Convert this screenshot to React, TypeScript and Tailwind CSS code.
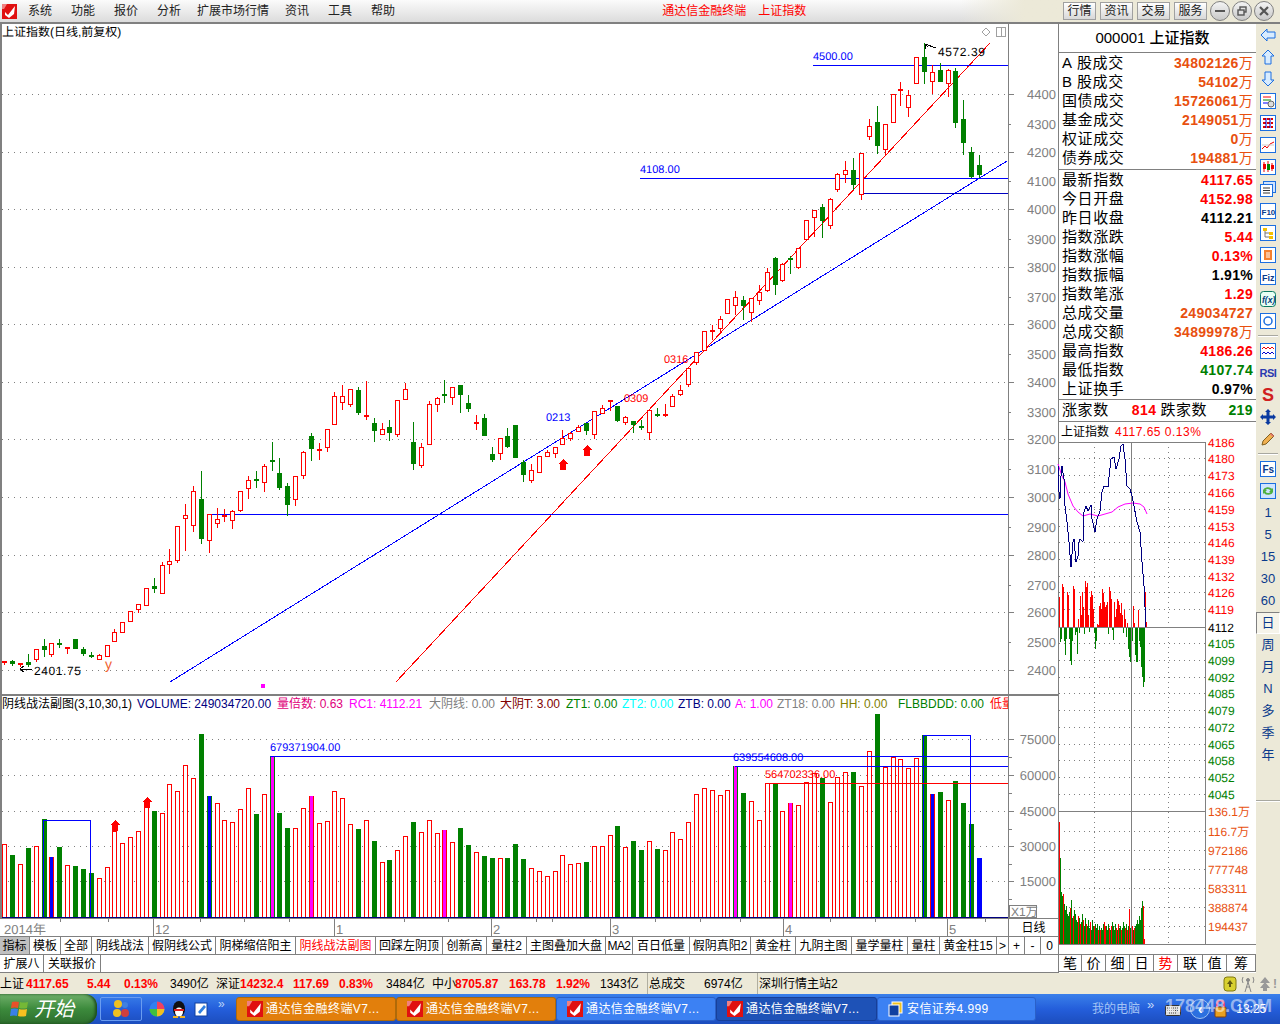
import type { ReactNode } from 'react';

const RED = '#ff0000';
const GREEN = '#008000';
const BLUE = '#0000ff';
const ORANGE = '#e8500f';
const GREY = '#808080';

// hi, body top, body bottom, lo (page pixels), r = up, g = down
type Candle = [number, number, number, number, 'r' | 'g'];
const CANDLES: Candle[] = [
  [661, 661, 663, 665, 'r'], [660, 661, 664, 666, 'g'], [663, 663, 665, 667, 'r'], [654, 662, 665, 667, 'g'],
  [649, 649, 659, 662, 'r'], [639, 646, 650, 657, 'g'], [643, 643, 654, 657, 'r'], [639, 643, 645, 648, 'g'],
  [647, 647, 648, 654, 'r'], [639, 639, 649, 649, 'g'], [647, 649, 654, 656, 'g'], [652, 655, 656, 658, 'g'],
  [654, 655, 659, 659, 'r'], [645, 645, 656, 657, 'r'], [629, 632, 641, 642, 'r'], [622, 622, 632, 632, 'r'],
  [611, 611, 621, 621, 'r'], [604, 604, 609, 613, 'r'], [588, 588, 605, 606, 'r'], [578, 586, 589, 593, 'g'],
  [562, 565, 593, 593, 'r'], [549, 561, 564, 574, 'r'], [526, 526, 560, 563, 'r'], [504, 515, 518, 551, 'r'],
  [486, 491, 525, 532, 'r'], [471, 499, 539, 544, 'g'], [514, 514, 540, 553, 'r'], [508, 519, 523, 528, 'r'],
  [509, 515, 517, 522, 'r'], [510, 511, 520, 529, 'r'], [491, 491, 510, 512, 'r'], [476, 480, 488, 499, 'r'],
  [471, 479, 481, 488, 'g'], [464, 466, 482, 492, 'r'], [442, 460, 461, 471, 'g'], [458, 473, 488, 490, 'g'],
  [483, 486, 505, 516, 'g'], [476, 476, 499, 506, 'r'], [451, 452, 475, 479, 'r'], [433, 436, 449, 461, 'g'],
  [443, 449, 451, 460, 'r'], [429, 429, 447, 452, 'r'], [392, 396, 424, 424, 'r'], [385, 396, 402, 410, 'r'],
  [389, 389, 404, 407, 'r'], [387, 390, 413, 415, 'g'], [381, 415, 417, 420, 'r'], [418, 423, 431, 442, 'g'],
  [423, 429, 434, 435, 'r'], [420, 427, 433, 441, 'g'], [400, 400, 434, 437, 'r'], [383, 389, 399, 399, 'r'],
  [422, 442, 464, 470, 'g'], [443, 447, 465, 468, 'r'], [401, 404, 444, 445, 'r'], [397, 398, 404, 412, 'r'],
  [380, 394, 396, 403, 'g'], [387, 387, 397, 405, 'r'], [385, 385, 395, 413, 'g'], [395, 403, 409, 412, 'g'],
  [415, 422, 423, 430, 'r'], [414, 418, 436, 436, 'g'], [447, 454, 460, 462, 'g'], [438, 438, 453, 460, 'r'],
  [428, 436, 447, 448, 'g'], [425, 425, 458, 458, 'g'], [460, 462, 475, 482, 'g'], [464, 470, 480, 483, 'r'],
  [456, 456, 472, 473, 'r'], [450, 452, 456, 457, 'r'], [447, 447, 453, 458, 'r'], [430, 438, 444, 444, 'r'],
  [432, 433, 438, 441, 'r'], [425, 427, 431, 431, 'r'], [423, 423, 431, 435, 'g'], [411, 411, 434, 439, 'r'],
  [405, 408, 413, 413, 'r'], [400, 400, 402, 411, 'r'], [406, 406, 421, 422, 'g'], [416, 417, 422, 425, 'r'],
  [421, 421, 425, 433, 'g'], [420, 426, 427, 430, 'g'], [410, 410, 432, 440, 'r'], [408, 414, 415, 417, 'g'],
  [404, 414, 415, 417, 'r'], [394, 396, 406, 407, 'r'], [385, 390, 394, 396, 'r'], [368, 368, 384, 387, 'r'],
  [352, 352, 362, 365, 'r'], [331, 331, 350, 351, 'r'], [325, 330, 331, 340, 'r'], [316, 319, 328, 333, 'r'],
  [299, 299, 313, 314, 'r'], [291, 297, 305, 315, 'r'], [296, 300, 306, 320, 'g'], [298, 298, 312, 322, 'r'],
  [285, 292, 300, 305, 'r'], [268, 272, 290, 292, 'r'], [257, 258, 285, 295, 'g'], [263, 264, 280, 282, 'r'],
  [256, 258, 260, 274, 'g'], [248, 248, 267, 269, 'r'], [220, 220, 239, 240, 'r'], [210, 210, 217, 237, 'r'],
  [204, 207, 221, 238, 'g'], [198, 199, 225, 229, 'r'], [173, 174, 189, 192, 'r'], [161, 170, 174, 183, 'r'],
  [158, 170, 185, 190, 'g'], [153, 153, 194, 200, 'r'], [119, 126, 136, 140, 'r'], [106, 122, 146, 154, 'g'],
  [124, 124, 149, 156, 'r'], [94, 94, 122, 123, 'r'], [82, 89, 91, 106, 'r'], [90, 95, 107, 117, 'r'],
  [57, 57, 83, 83, 'r'], [43, 57, 72, 84, 'g'], [65, 72, 81, 94, 'r'], [63, 70, 82, 82, 'g'],
  [69, 70, 83, 97, 'r'], [68, 71, 123, 128, 'g'], [100, 119, 143, 155, 'g'], [147, 152, 177, 178, 'g'],
  [155, 165, 175, 178, 'g'],
];

// top of each volume bar (page pixels)
type BarKind = 'r' | 'g' | 'B' | 'G' | 'M' | 'N' | 'S';
const BARS: [number, BarKind][] = [
  [844, 'r'], [855, 'g'], [864, 'r'], [848, 'g'], [846, 'r'], [819, 'g'], [857, 'B'], [847, 'g'], [865, 'r'], [866, 'g'],
  [869, 'g'], [873, 'g'], [878, 'r'], [867, 'r'], [831, 'r'], [843, 'r'], [837, 'r'], [831, 'r'], [807, 'r'], [811, 'g'],
  [813, 'r'], [784, 'r'], [791, 'r'], [765, 'r'], [778, 'r'], [734, 'g'], [796, 'G'], [803, 'r'], [820, 'r'], [822, 'r'],
  [809, 'r'], [788, 'r'], [814, 'g'], [794, 'r'], [756, 'N'], [813, 'g'], [828, 'g'], [828, 'r'], [808, 'r'], [796, 'M'],
  [823, 'r'], [821, 'r'], [791, 'r'], [798, 'r'], [824, 'r'], [829, 'g'], [820, 'r'], [841, 'g'], [862, 'r'], [860, 'g'],
  [850, 'r'], [836, 'r'], [822, 'g'], [832, 'r'], [820, 'r'], [833, 'r'], [830, 'M'], [842, 'r'], [828, 'g'], [845, 'g'],
  [852, 'r'], [856, 'g'], [858, 'g'], [858, 'r'], [858, 'g'], [844, 'g'], [859, 'g'], [868, 'r'], [871, 'r'], [876, 'r'],
  [871, 'r'], [855, 'r'], [864, 'r'], [863, 'r'], [862, 'g'], [846, 'r'], [846, 'r'], [835, 'r'], [826, 'g'], [847, 'r'],
  [841, 'g'], [850, 'g'], [841, 'r'], [849, 'g'], [850, 'r'], [832, 'r'], [839, 'r'], [822, 'r'], [794, 'r'], [788, 'r'],
  [790, 'r'], [795, 'r'], [790, 'r'], [766, 'N'], [793, 'g'], [801, 'r'], [820, 'r'], [783, 'r'], [783, 'g'], [811, 'r'],
  [803, 'M'], [805, 'r'], [782, 'r'], [773, 'r'], [778, 'g'], [802, 'r'], [777, 'r'], [772, 'r'], [772, 'g'], [786, 'r'],
  [751, 'r'], [714, 'g'], [767, 'r'], [757, 'r'], [759, 'r'], [768, 'r'], [758, 'r'], [735, 'g'], [794, 'B'], [792, 'g'],
  [800, 'r'], [781, 'g'], [803, 'g'], [824, 'g'], [858, 'S'],
];

const MAIN_AXIS: [string, number][] = [
  ['4400', 94], ['4300', 124], ['4200', 152], ['4100', 181], ['4000', 209], ['3900', 239], ['3800', 267],
  ['3700', 297], ['3600', 324], ['3500', 354], ['3400', 382], ['3300', 412], ['3200', 439], ['3100', 469],
  ['3000', 497], ['2900', 527], ['2800', 555], ['2700', 585], ['2600', 612], ['2500', 642], ['2400', 670],
];

const MINI_LABELS: [string, number, string][] = [
  ['4186', 443, RED], ['4180', 459, RED], ['4173', 476, RED], ['4166', 493, RED], ['4159', 510, RED], ['4153', 527, RED],
  ['4146', 543, RED], ['4139', 560, RED], ['4132', 577, RED], ['4126', 593, RED], ['4119', 610, RED], ['4112', 628, '#000'],
  ['4105', 644, GREEN], ['4099', 661, GREEN], ['4092', 678, GREEN], ['4085', 694, GREEN], ['4079', 711, GREEN],
  ['4072', 728, GREEN], ['4065', 745, GREEN], ['4058', 761, GREEN], ['4052', 778, GREEN], ['4045', 795, GREEN],
  ['136.1万', 812, ORANGE], ['116.7万', 832, ORANGE], ['972186', 851, ORANGE], ['777748', 870, ORANGE],
  ['583311', 889, ORANGE], ['388874', 908, ORANGE], ['194437', 927, ORANGE],
];

// one value per minute, + red, - green
const MINI_BARS = [
  30, -15, -12, 43, 40, -14, -28, -12, 35, 32, -12, -34, -38, -14, 41, 38, -8, -5, -27, 8, -6, 31, 12, 35, 20, -7, 46, 40, 44, 12,
  -5, 30, 36, 32, 18, -6, -22, -14, 3, 2, 21, 24, 18, 38, 34, 25, 20, 22, 25, -7, 40, 36, 28, -3, -13, 25, 10, 18, 28, 26, 22, 14,
  24, 12, -6, 17, 8, -10, 4, -22, -30, -35, -28, -14, 21, 4, -28, -35, -35, 17, -14, -20, -40, -50, -60, -55, 35, 5,
];
const MINI_VOLS = [
  122, -86, -52, -48, 50, -40, -34, -38, -30, -28, -32, 36, -44, -26, 28, -34, -30, -24, -22, 28, -26, 20, -22, -30, 24, -18, -26, 20,
  -18, -24, -16, 22, -14, -24, -18, 18, -20, -16, -20, 14, -18, 14, -16, -14, -20, 22, 18, -18, -14, -20, 16, -14, 18, -22, -18, -14,
  -20, 16, -14, 20, -16, -18, 14, -16, -22, -18, 16, -20, 14, -18, 35, -16, -22, 18, -14, 16, -18, -20, -24, -20, -28, -24, -36, -43, 38, 5,
];

const PRICE_LINE = '1058,467 1059,493 1060,500 1061,477 1062,467 1064,480 1065,507 1067,523 1069,543 1071,568 1073,543 1074,540 1076,563 1078,557 1079,543 1080,540 1083,543 1084,513 1086,507 1088,512 1091,506 1092,520 1095,533 1097,520 1100,512 1102,493 1104,487 1108,488 1111,460 1114,458 1116,470 1119,460 1121,447 1123,445 1125,460 1127,487 1130,490 1132,497 1134,507 1137,523 1140,533 1142,563 1144,587 1146,628';
const AVG_LINE = '1058,465 1062,477 1065,483 1068,495 1073,507 1078,513 1083,517 1090,515 1098,517 1105,515 1112,513 1118,508 1125,505 1133,504 1140,505 1144,508 1147,515';

const CN = "font-['Liberation_Sans','Noto_Sans_CJK_SC',sans-serif]";

function UpArrow({ x, y }: { x: number; y: number }) {
  return <polygon points={`${x},${y} ${x + 5},${y + 5} ${x + 3},${y + 5} ${x + 3},${y + 11} ${x - 3},${y + 11} ${x - 3},${y + 5} ${x - 5},${y + 5}`} fill={RED} />;
}

function MainChart() {
  return (
    <svg width={1058} height={670} viewBox="0 24 1058 670" className="block bg-white" shapeRendering="crispEdges">
      <rect x={0} y={24} width={2} height={670} fill={GREY} />
      {[94, 152, 209, 267, 324, 382, 439, 497, 555, 612, 670].map((y) => (
        <line key={y} x1={2} x2={1008} y1={y + 0.5} y2={y + 0.5} stroke={GREY} strokeDasharray="1 5" />
      ))}
      {MAIN_AXIS.map(([label, y], i) => (
        <g key={label}>
          <line x1={1008} x2={i % 2 ? 1011 : 1014} y1={y + 0.5} y2={y + 0.5} stroke={GREY} />
          <text x={1056} y={y + 5} textAnchor="end" fontSize={13} fill={GREY} textRendering="geometricPrecision">{label}</text>
        </g>
      ))}

      {/* trend lines */}
      <line x1={170} y1={682} x2={1007} y2={161} stroke={BLUE} />
      <line x1={396} y1={682} x2={990} y2={43} stroke={RED} />
      <line x1={813} x2={1008} y1={65.5} y2={65.5} stroke={BLUE} />
      <line x1={640} x2={1008} y1={178.5} y2={178.5} stroke={BLUE} />
      <line x1={860} x2={1008} y1={193.5} y2={193.5} stroke="#0000c0" />
      <line x1={207} x2={1008} y1={514.5} y2={514.5} stroke={BLUE} />

      {CANDLES.map(([hi, top, bot, lo, kind], n) => {
        const cx = Math.round(4.33 + 7.86 * n);
        const color = kind === 'r' ? RED : GREEN;
        const flat = bot - top <= 2;
        return (
          <g key={n}>
            <line x1={cx + 0.5} x2={cx + 0.5} y1={hi} y2={lo} stroke={color} />
            {kind === 'r' && !flat ? (
              <rect x={cx - 1.5} y={top + 0.5} width={4} height={bot - top} fill="#fff" stroke={RED} />
            ) : (
              <rect x={cx - 2} y={top} width={5} height={Math.max(bot - top, 2)} fill={color} />
            )}
          </g>
        );
      })}

      <UpArrow x={563} y={459} />
      <UpArrow x={587} y={445} />
      <rect x={261} y={684} width={4} height={4} fill="#ff00ff" />
      <path d="M925 44v5M925 44l3 3M925 44l11 4" stroke="#000" fill="none" />
      <path d="M20 669h12M20 669l4-3M20 669l4 3" stroke="#000" fill="none" />

      <g textRendering="geometricPrecision">
        <text x={2} y={36} fontSize={12} fill="#000">上证指数(日线,前复权)</text>
        <text x={813} y={60} fontSize={11} fill={BLUE}>4500.00</text>
        <text x={640} y={173} fontSize={11} fill={BLUE}>4108.00</text>
        <text x={938} y={56} fontSize={12} letterSpacing={0.6} fill="#000">4572.39</text>
        <text x={34} y={675} fontSize={12} letterSpacing={0.6} fill="#000">2401.75</text>
        <text x={546} y={421} fontSize={11} fill={BLUE}>0213</text>
        <text x={624} y={402} fontSize={11} fill={RED}>0309</text>
        <text x={664} y={363} fontSize={11} fill={RED}>0316</text>
        <text x={105} y={669} fontSize={14} fill="#f06030">y</text>
      </g>

      <path d="M986 28l4 4-4 4-4-4z" fill="#fff" stroke="#a0a0a0" />
      <rect x={996.5} y={27.5} width={9} height={9} fill="#fff" stroke="#a0a0a0" />
      <line x1={1001.5} x2={1001.5} y1={28} y2={36} stroke="#a0a0a0" />
      <line x1={1008.5} x2={1008.5} y1={24} y2={694} stroke={GREY} />
    </svg>
  );
}

function VolumeBars() {
  return (
    <svg width={1006} height={207} viewBox="2 711 1006 207" className="block" shapeRendering="crispEdges">
      {[739, 775, 811, 846, 881].map((y) => (
        <line key={y} x1={2} x2={1008} y1={y + 0.5} y2={y + 0.5} stroke={GREY} strokeDasharray="1 5" />
      ))}
      {BARS.map(([top, kind], n) => {
        const cx = Math.round(4.33 + 7.86 * n);
        const h = 917 - top;
        if (kind === 'r') {
          return <rect key={n} x={cx - 1.5} y={top + 0.5} width={4} height={h} fill="#fff" stroke={RED} />;
        }
        const edge = kind === 'B' || kind === 'M' ? RED : kind === 'S' ? BLUE : GREEN;
        const core = kind === 'B' || kind === 'G' || kind === 'S' ? BLUE : kind === 'g' ? GREEN : '#ff00ff';
        return (
          <g key={n}>
            <rect x={cx - 2} y={top} width={5} height={h} fill={edge} />
            <rect x={cx - 1} y={top} width={3} height={h} fill={core} />
          </g>
        );
      })}
      <rect x={43.5} y={820.5} width={47} height={97} fill="none" stroke={BLUE} />
      <rect x={923.5} y={735.5} width={47} height={182} fill="none" stroke={BLUE} />
      <line x1={270} x2={1008} y1={756.5} y2={756.5} stroke={BLUE} />
      <line x1={735} x2={1008} y1={766.5} y2={766.5} stroke={BLUE} />
      <line x1={765} x2={1008} y1={783.5} y2={783.5} stroke={RED} />
      <line x1={2} x2={1008} y1={917.5} y2={917.5} stroke="#000080" />
      <g textRendering="geometricPrecision" fontSize={11}>
        <text x={270} y={751} fill={BLUE}>679371904.00</text>
        <text x={733} y={761} fill={BLUE}>639554608.00</text>
        <text x={765} y={778} fill={RED}>564702336.00</text>
      </g>
      <UpArrow x={115} y={820} />
      <UpArrow x={147} y={797} />
    </svg>
  );
}

function VolumeAxis() {
  const labels: [string, number][] = [['75000', 739], ['60000', 775], ['45000', 811], ['30000', 846], ['15000', 881]];
  return (
    <svg width={49} height={222} viewBox="1009 696 49 222" className="block" shapeRendering="crispEdges">
      {labels.map(([label, y]) => (
        <g key={label}>
          <line x1={1009} x2={1014} y1={y + 0.5} y2={y + 0.5} stroke={GREY} />
          <line x1={1009} x2={1012} y1={y + 18.5} y2={y + 18.5} stroke={GREY} />
          <text x={1056} y={y + 5} textAnchor="end" fontSize={13} fill={GREY} textRendering="geometricPrecision">{label}</text>
        </g>
      ))}
      <rect x={1009.5} y={905.5} width={27} height={12} fill="#fff" stroke={GREY} />
      <text x={1011} y={916} fontSize={12} fill={GREY} textRendering="geometricPrecision">X1万</text>
    </svg>
  );
}

const VOL_HEADER: [string, string, string][] = [
  ['阴线战法副图(3,10,30,1)', 'text-black', 'w-[135px]'],
  ['VOLUME: 249034720.00', 'text-[#000080]', 'w-[140px]'],
  ['量倍数: 0.63', 'text-[#e0007a]', 'w-[72px]'],
  ['RC1: 4112.21', 'text-[#ff00ff]', 'w-[80px]'],
  ['大阴线: 0.00', 'text-[#808080]', 'w-[71px]'],
  ['大阴T: 3.00', 'text-[#800000]', 'w-[66px]'],
  ['ZT1: 0.00', 'text-[#008000]', 'w-[56px]'],
  ['ZT2: 0.00', 'text-[#00ffff]', 'w-[56px]'],
  ['ZTB: 0.00', 'text-[#000080]', 'w-[57px]'],
  ['A: 1.00', 'text-[#ff00ff]', 'w-[42px]'],
  ['ZT18: 0.00', 'text-[#808080]', 'w-[63px]'],
  ['HH: 0.00', 'text-[#808000]', 'w-[58px]'],
  ['FLBBDDD: 0.00', 'text-[#008000]', 'w-[92px]'],
  ['低量', 'text-[#ff0000]', 'w-[30px]'],
];

function TimeAxis() {
  const months: [string, number][] = [['12', 154], ['1', 335], ['2', 492], ['3', 611], ['4', 784], ['5', 948]];
  const ticks = [60, 108, 200, 244, 289, 404, 448, 536, 552, 655, 700, 740, 830, 875, 915, 985];
  return (
    <svg width={1008} height={18} viewBox="0 919 1008 18" className="block" shapeRendering="crispEdges">
      {ticks.map((x) => (
        <line key={x} x1={x + 0.5} x2={x + 0.5} y1={919} y2={922} stroke={GREY} />
      ))}
      {months.map(([label, x]) => (
        <g key={label}>
          <line x1={x - 0.5} x2={x - 0.5} y1={919} y2={936} stroke={GREY} />
          <text x={x + 1} y={934} fontSize={13} fill={GREY} textRendering="geometricPrecision">{label}</text>
        </g>
      ))}
      <text x={4} y={934} fontSize={13} fill={GREY} textRendering="geometricPrecision">2014年</text>
    </svg>
  );
}

const TABS: [string, string][] = [
  ['指标', 'w-[30px] bg-[#c0c0c0]'], ['模板', 'w-[31px]'], ['全部', 'w-[31px]'], ['阴线战法', 'w-[57px]'], ['假阴线公式', 'w-[67px]'],
  ['阴梯缩倍阳主', 'w-[80px]'], ['阴线战法副图', 'w-[80px] text-[#ff0000]'], ['回踩左阴顶', 'w-[67px]'], ['创新高', 'w-[44px]'],
  ['量柱2', 'w-[40px]'], ['主图叠加大盘', 'w-[79px]'], ['MA2', 'w-[27px] tracking-[-0.6px]'], ['百日低量', 'w-[57px]'], ['假阴真阳2', 'w-[61px]'],
  ['黄金柱', 'w-[45px]'], ['九阴主图', 'w-[56px]'], ['量学量柱', 'w-[56px]'], ['量柱', 'w-[32px]'], ['黄金柱15', 'w-[57px]'],
  ['>', 'w-[12px]'], ['+', 'w-[16px]'], ['-', 'w-[16px]'], ['0', 'w-[18px]'],
];

function LeftColumn() {
  return (
    <div className="flex w-[1058px] flex-col bg-white">
      <MainChart />
      <div className="flex h-[224px] border-t-2 border-l-2 border-[#808080]">
        <div className="flex w-[1006px] flex-col overflow-hidden">
          <div className="flex h-[15px] items-center whitespace-nowrap text-[12px]">
            {VOL_HEADER.map(([label, color, w]) => (
              <span key={label} className={`shrink-0 ${w} ${color}`}>{label}</span>
            ))}
          </div>
          <VolumeBars />
        </div>
        <div className="border-l border-[#808080]"><VolumeAxis /></div>
      </div>
      <div className="flex h-[19px] border-y border-[#808080]">
        <TimeAxis />
        <div className="flex w-[50px] items-center justify-center border-l border-[#808080] text-[12px]">日线</div>
      </div>
      <div className="flex h-[18px] border-b border-[#808080]">
        {TABS.map(([label, cls]) => (
          <div key={label} className={`flex shrink-0 items-center justify-center overflow-hidden border-r border-[#808080] text-[12px] whitespace-nowrap ${cls}`}>{label}</div>
        ))}
      </div>
      <div className="flex h-[18px] border-b border-[#808080]">
        <div className="flex w-[44px] items-center justify-center border-r border-[#808080] text-[12px]">扩展八</div>
        <div className="flex w-[57px] items-center justify-center border-r border-[#808080] text-[12px]">关联报价</div>
      </div>
    </div>
  );
}

type Row = [string, string, string?, string?];
const TRADE_ROWS: Row[] = [
  ['A股成交', '34802126', ORANGE, '万'], ['B股成交', '54102', ORANGE, '万'], ['国债成交', '15726061', ORANGE, '万'],
  ['基金成交', '2149051', ORANGE, '万'], ['权证成交', '0', ORANGE, '万'], ['债券成交', '194881', ORANGE, '万'],
];
const INDEX_ROWS: Row[] = [
  ['最新指数', '4117.65', RED], ['今日开盘', '4152.98', RED], ['昨日收盘', '4112.21', '#000'], ['指数涨跌', '5.44', RED],
  ['指数涨幅', '0.13%', RED], ['指数振幅', '1.91%', '#000'], ['指数笔涨', '1.29', RED], ['总成交量', '249034727', ORANGE],
  ['总成交额', '34899978', ORANGE, '万'], ['最高指数', '4186.26', RED], ['最低指数', '4107.74', GREEN], ['上证换手', '0.97%', '#000'],
];

function InfoRow({ row }: { row: Row }) {
  const [label, value, color, unit] = row;
  const latin = /^[A-Z]/.test(label);
  return (
    <div className="flex h-[19px] items-center justify-between pl-[3px] pr-[3px]">
      <span className="text-[15px] tracking-[0.6px]">
        {latin ? <span className="inline-block w-[15px] font-light">{label[0]}</span> : null}
        {latin ? label.slice(1) : label}
      </span>
      <span className="flex items-center text-[14px] font-bold tracking-[0.3px]" style={{ color }}>
        {value}
        {unit && <span className="text-[14px] font-normal">{unit}</span>}
      </span>
    </div>
  );
}

function MiniChart() {
  const rows = MINI_LABELS.filter(([label]) => label !== '4186' && label !== '4112' && label !== '136.1万');
  return (
    <svg width={197} height={502} viewBox="1059 443 197 502" className="block overflow-visible" shapeRendering="crispEdges">
      {rows.map(([label, y]) => (
        <line key={label} x1={1059} x2={1206} y1={y + 0.5} y2={y + 0.5} stroke={GREY} strokeDasharray="1 4" />
      ))}
      {[1094, 1168].map((x) => (
        <line key={x} x1={x + 0.5} x2={x + 0.5} y1={443} y2={945} stroke={GREY} strokeDasharray="1 4" />
      ))}
      <line x1={1059} x2={1206} y1={443.5} y2={443.5} stroke={GREY} />
      {MINI_BARS.map((v, i) => (
        <line key={i} x1={1059.5 + i} x2={1059.5 + i} y1={628} y2={628 - v} stroke={v > 0 ? RED : GREEN} />
      ))}
      {MINI_VOLS.map((v, i) => (
        <line key={i} x1={1059.5 + i} x2={1059.5 + i} y1={945} y2={945 - Math.abs(v)} stroke={v > 0 ? RED : GREEN} />
      ))}
      <line x1={1059} x2={1206} y1={628.5} y2={628.5} stroke={GREY} />
      <line x1={1059} x2={1206} y1={812.5} y2={812.5} stroke={GREY} />
      <line x1={1131.5} x2={1131.5} y1={443} y2={945} stroke={GREY} />
      <line x1={1205.5} x2={1205.5} y1={443} y2={945} stroke={GREY} />
      <polyline points={AVG_LINE} fill="none" stroke="#ff00ff" shapeRendering="auto" />
      <polyline points={PRICE_LINE} fill="none" stroke="#000080" />
      <g textRendering="geometricPrecision" fontSize={12}>
        {MINI_LABELS.map(([label, y, color]) => (
          <text key={label} x={1208} y={y + 5} fill={color}>{label}</text>
        ))}
      </g>
    </svg>
  );
}

function RightColumn() {
  const tabs: [string, string][] = [['笔', 'w-[23px]'], ['价', 'w-[24px]'], ['细', 'w-[24px]'], ['日', 'w-[24px]'], ['势', 'w-[24px] text-[#ff0000]'], ['联', 'w-[25px]'], ['值', 'w-[24px]'], ['筹', 'w-[29px]']];
  return (
    <div className="flex w-[198px] flex-col border-l border-[#808080] bg-white">
      <div className="flex h-[29px] items-center justify-center border-b border-[#808080] pr-[10px] text-[15px] font-medium">000001 上证指数</div>
      <div className="border-b border-[#808080] pt-[1px] pb-[1px]">
        {TRADE_ROWS.map((row) => <InfoRow key={row[0]} row={row} />)}
      </div>
      <div className="border-b border-[#808080] pt-[1px]">
        {INDEX_ROWS.map((row) => <InfoRow key={row[0]} row={row} />)}
      </div>
      <div className="flex h-[22px] items-center border-b border-[#808080] px-[3px]">
        <span className="text-[15px] tracking-[0.6px]">涨家数</span>
        <span className="ml-[23px] text-[14px] font-bold tracking-[0.4px] text-[#ff0000]">814</span>
        <span className="ml-[4px] text-[15px] tracking-[0.6px]">跌家数</span>
        <span className="ml-auto text-[14px] font-bold tracking-[0.4px] text-[#008000]">219</span>
      </div>
      <div className="flex h-[20px] items-start gap-[6px] pt-[3px] pl-[2px] text-[12px] leading-[15px]">
        <span>上证指数</span>
        <span className="tracking-[0.5px] text-[#ff0000]">4117.65 0.13%</span>
      </div>
      <MiniChart />
      <div className="h-[10px] border-t border-[#808080]" />
      <div className="flex h-[18px] border-y border-[#808080]">
        {tabs.map(([label, cls]) => (
          <div key={label} className={`flex items-center justify-center border-r border-[#808080] text-[14px] ${cls}`}>{label}</div>
        ))}
      </div>
    </div>
  );
}

function ToolBox({ children }: { children: ReactNode }) {
  return (
    <svg width={16} height={16} viewBox="0 0 16 16">
      <rect x={0.5} y={0.5} width={15} height={15} fill="#fff" stroke="#1c6fe0" />
      {children}
    </svg>
  );
}

function ToolRow({ children }: { children: ReactNode }) {
  return <div className="flex h-[22px] items-center justify-center text-[13px] text-[#0a3a8c]">{children}</div>;
}

function Toolbar() {
  const arrow = 'fill-[#d8ecff] stroke-[#1c6fe0]';
  return (
    <div className="flex w-[24px] flex-col bg-[#ece9d8]">
      <ToolRow><svg width={16} height={14} viewBox="0 0 16 14"><path className={arrow} d="M1 7l6-6v3h8v6H7v3z" /></svg></ToolRow>
      <ToolRow><svg width={14} height={16} viewBox="0 0 14 16"><path className={arrow} d="M7 1l6 6h-3v8H4V7H1z" /></svg></ToolRow>
      <ToolRow><svg width={14} height={16} viewBox="0 0 14 16"><path className={arrow} d="M7 15l6-6h-3V1H4v8H1z" /></svg></ToolRow>
      <ToolRow><ToolBox><path d="M3 4h8" stroke="#f00" /><path d="M3 7h8" stroke="#080" /><path d="M3 10h5" stroke="#00f" /><circle cx={11} cy={11} r={3} fill="#ddd" stroke="#666" /></ToolBox></ToolRow>
      <ToolRow><ToolBox><path d="M3 4h10M3 8h10M3 12h10" stroke="#d00" strokeDasharray="3 1" strokeWidth={2} /><path d="M6 3v10M10 3v10" stroke="#00c" strokeWidth={1} /></ToolBox></ToolRow>
      <ToolRow><ToolBox><path d="M2 12l3-3 2 2 3-4 4-2" stroke="#e00" fill="none" /><path d="M2 8h12" stroke="#ccc" /></ToolBox></ToolRow>
      <ToolRow><ToolBox><path d="M4 3v10M8 2v11M12 4v8" stroke="#e00" /><rect x={3} y={5} width={3} height={5} fill="#e00" /><rect x={7} y={5} width={3} height={6} fill="#080" /><rect x={11} y={6} width={3} height={4} fill="#e00" /></ToolBox></ToolRow>
      <ToolRow><svg width={16} height={16} viewBox="0 0 16 16"><rect x={3.5} y={0.5} width={12} height={11} fill="#cfe4ff" stroke="#1c6fe0" /><rect x={0.5} y={3.5} width={12} height={12} fill="#fff" stroke="#1c6fe0" /><path d="M3 7h7M3 9.5h7M3 12h7" stroke="#333" /></svg></ToolRow>
      <ToolRow><ToolBox><text x={1.5} y={11.5} fontSize={8} fontWeight={700} fill="#0a3a8c">F10</text></ToolBox></ToolRow>
      <ToolRow><ToolBox><rect x={3} y={3} width={4} height={3} fill="#f5c000" /><rect x={9} y={7} width={4} height={3} fill="#f5c000" /><rect x={9} y={11} width={4} height={3} fill="#f5c000" /><path d="M5 6v6h4M5 8h4" stroke="#777" fill="none" /></ToolBox></ToolRow>
      <ToolRow><ToolBox><rect x={4} y={3} width={8} height={10} fill="#f58030" /><path d="M6 6h4M6 8h4M6 10h4" stroke="#fff" /></ToolBox></ToolRow>
      <ToolRow><ToolBox><text x={2} y={11.5} fontSize={9} fontWeight={700} fill="#0a3a8c">Fiz</text></ToolBox></ToolRow>
      <ToolRow><svg width={16} height={16} viewBox="0 0 16 16"><rect x={0.5} y={0.5} width={15} height={15} rx={3} fill="#e8fff4" stroke="#0a7a60" /><text x={2} y={11.5} fontSize={8.5} fontStyle="italic" fontWeight={700} fill="#063a7c">f(x)</text></svg></ToolRow>
      <ToolRow><ToolBox><circle cx={8} cy={8} r={4} fill="none" stroke="#1c6fe0" strokeWidth={1.5} /></ToolBox></ToolRow>
      <div className="mx-[2px] my-[3px] h-[2px] border-y border-t-[#a8a8a0] border-b-white" />
      <ToolRow><ToolBox><path d="M2 6l2-2 2 2 2-2 2 2 2-2 2 2" stroke="#e00" fill="none" /><path d="M2 11l2-2 2 2 2-2 2 2 2-2 2 2" stroke="#00c" fill="none" /></ToolBox></ToolRow>
      <ToolRow><span className="text-[11px] font-bold tracking-[-0.5px] text-[#2a3ab0]">RSI</span></ToolRow>
      <ToolRow><span className="text-[18px] font-bold text-[#d02020]">S</span></ToolRow>
      <ToolRow><svg width={16} height={16} viewBox="0 0 16 16" fill="#0a3aa0"><path d="M8 0l3 3H9.5v3.5H13V5l3 3-3 3V9.5H9.5V13H11l-3 3-3-3h1.5V9.5H3V11L0 8l3-3v1.5h3.5V3H5z" /></svg></ToolRow>
      <ToolRow><svg width={16} height={16} viewBox="0 0 16 16"><path d="M11 2l3 3-8 8-4 1 1-4z" fill="#f0b050" stroke="#806020" /><path d="M11 2l3 3-1 1-3-3z" fill="#e07070" /></svg></ToolRow>
      <div className="mx-[2px] my-[3px] h-[2px] border-y border-t-[#a8a8a0] border-b-white" />
      <ToolRow><ToolBox><text x={2.5} y={12} fontSize={10} fontWeight={700} fill="#0a3a8c">Fs</text></ToolBox></ToolRow>
      <ToolRow><svg width={16} height={16} viewBox="0 0 16 16"><rect x={0.5} y={0.5} width={15} height={15} fill="#cfe4ff" stroke="#1c6fe0" /><path d="M3 7a5 4 0 0 1 9-1l1-1v4H9l1.5-1.5A3 3 0 0 0 5 8zM13 9a5 4 0 0 1-9 1l-1 1V7h4L5.5 8.5A3 3 0 0 0 11 8z" fill="#50b040" /></svg></ToolRow>
      {['1', '5', '15', '30', '60'].map((t) => <ToolRow key={t}>{t}</ToolRow>)}
      <div className="flex h-[22px] items-center justify-center border-y border-x border-t-[#808080] border-l-[#808080] border-r-white border-b-white bg-[#f6f4ea] text-[13px] text-[#0a3a8c]">日</div>
      {['周', '月', 'N', '多', '季', '年'].map((t) => <ToolRow key={t}>{t}</ToolRow>)}
      <div className="mt-[34px] h-[2px] border-y border-t-[#a8a8a0] border-b-white" />
    </div>
  );
}

function WindowButton({ children }: { children: ReactNode }) {
  return (
    <div className="flex h-[20px] w-[20px] items-center justify-center rounded-full border border-[#808080] bg-gradient-to-b from-[#f4f4f4] to-[#c8c8c8] text-[#555]">
      {children}
    </div>
  );
}

function Logo({ size = 15 }: { size?: number }) {
  return (
    <svg width={size} height={size} viewBox="0 0 15 15" className="shrink-0">
      <rect width={15} height={15} fill="#e01010" />
      <path d="M3 8l3 3 7-9-1 8-5 4-4-3z" fill="#fff" />
      <path d="M0 0h5L2 5H0z" fill="#f08080" />
    </svg>
  );
}

function TopBar() {
  const menus: [string, string][] = [
    ['系统', 'ml-[11px]'], ['功能', 'ml-[19px]'], ['报价', 'ml-[19px]'], ['分析', 'ml-[19px]'], ['扩展市场行情', 'ml-[16px]'],
    ['资讯', 'ml-[16px]'], ['工具', 'ml-[19px]'], ['帮助', 'ml-[19px]'],
  ];
  return (
    <div className="flex h-[24px] items-center border-b-2 border-[#808080] bg-gradient-to-b from-[#fbfbfb] to-[#dcdcdc] pl-[2px] text-[12px] text-[#222]">
      <Logo />
      {menus.map(([label, cls]) => <span key={label} className={cls}>{label}</span>)}
      <span className="ml-[267px] text-[#ff0000]">通达信金融终端</span>
      <span className="ml-[12px] text-[#ff0000]">上证指数</span>
      <div className="ml-auto flex h-full w-[320px] items-center justify-end bg-gradient-to-r from-transparent to-[#ece9d8] to-[20%] pr-[6px]">
        <div className="flex gap-[4px]">
          {['行情', '资讯', '交易', '服务'].map((t) => (
            <div key={t} className="flex h-[18px] w-[33px] items-center justify-center border border-[#a0a0a0] bg-gradient-to-b from-white to-[#d8d8d8]">{t}</div>
          ))}
        </div>
        <div className="ml-[3px] flex items-center gap-[2px]">
          <WindowButton><span className="h-[2px] w-[10px] bg-[#555]" /></WindowButton>
          <WindowButton><svg width={10} height={10} viewBox="0 0 10 10" fill="none" stroke="#555" strokeWidth={1.4}><rect x={3} y={1} width={6} height={5} /><rect x={1} y={4} width={6} height={5} fill="#e0e0e0" /></svg></WindowButton>
          <WindowButton><svg width={10} height={10} viewBox="0 0 10 10" stroke="#555" strokeWidth={2.2}><path d="M1 1l8 8M9 1l-8 8" /></svg></WindowButton>
        </div>
      </div>
    </div>
  );
}

function StatusBar() {
  const cells: [string, string][] = [
    ['上证', 'w-[26px]'], ['4117.65', 'w-[61px] b'], ['5.44', 'w-[37px] b'], ['0.13%', 'w-[46px] b'], ['3490亿', 'w-[46px]'],
    ['深证', 'w-[24px]'], ['14232.4', 'w-[53px] b'], ['117.69', 'w-[46px] b'], ['0.83%', 'w-[47px] b'], ['3484亿', 'w-[46px]'],
    ['中小', 'w-[23px]'], ['8705.87', 'w-[54px] b'], ['163.78', 'w-[47px] b'], ['1.92%', 'w-[44px] b'], ['1343亿', 'w-[47px]'],
  ];
  return (
    <div className="flex h-[21px] items-center whitespace-nowrap bg-[#ece9d8] text-[12px]">
      {cells.map(([t, cls], i) => (
        <span key={i} className={cls.endsWith(' b') ? `${cls.slice(0, -2)} shrink-0 font-bold text-[#ff0000]` : `${cls} shrink-0`}>{t}</span>
      ))}
      <div className="flex h-full w-[111px] shrink-0 items-center border-x border-[#b0ae9f] pl-[1px]">
        <span className="w-[55px]">总成交</span>
        <span>6974亿</span>
      </div>
      <span className="ml-[1px]">深圳行情主站2</span>
      <div className="ml-auto flex items-center gap-[2px] pr-[1px]">
        <svg width={14} height={16} viewBox="0 0 14 16"><rect x={1} y={1} width={12} height={14} rx={3} fill="#d8d030" stroke="#807810" /><path d="M7 4l3 4H8v3H6V8H4z" fill="#605810" /></svg>
        <svg width={18} height={18} viewBox="0 0 18 18" fill="none" stroke="#888"><path d="M9 7l-3 10M9 7l3 10M7 12h4" /><circle cx={9} cy={5} r={1.5} fill="#888" /><path d="M4 2a6 6 0 0 0 0 6M14 2a6 6 0 0 1 0 6" /></svg>
        <svg width={12} height={16} viewBox="0 0 12 16" fill="#999"><path d="M6 1l5 6H1zM6 6l5 6H1zM4 11h4v4H4z" /></svg>
        <span className="w-[6px] font-bold text-[#999]">!</span>
      </div>
    </div>
  );
}

function TaskButton({ label, cls, icon }: { label: string; cls: string; icon?: ReactNode }) {
  return (
    <div className={`flex h-[24px] items-center gap-[3px] rounded-[3px] border pl-[10px] text-[12px] text-white ${cls}`}>
      {icon ?? <Logo size={16} />}
      <span className="tracking-[0.4px] whitespace-nowrap">{label}</span>
    </div>
  );
}

function Taskbar() {
  return (
    <div className="relative flex h-[30px] items-center overflow-hidden bg-gradient-to-b from-[#3b80ea] via-[#245edb] to-[#1c4dbd] text-white">
      <div className="flex h-full w-[97px] items-center gap-[4px] rounded-r-[12px] bg-gradient-to-b from-[#6fb06a] via-[#3c8a3c] to-[#2d6e2d] pl-[10px] shadow-[inset_-2px_0_3px_#1c4a1c]">
        <svg width={20} height={20} viewBox="0 0 20 20">
          <path d="M2 3q3-1 7 0l-1 6q-3-1-7 0z" fill="#e8502a" />
          <path d="M10 3q3 1 8 0l-1 6q-4 1-8 0z" fill="#74b836" />
          <path d="M1 10q3-1 7 0l-1 7q-3-1-7 0z" fill="#3a80e8" />
          <path d="M9 10q4 1 8 0l-1 7q-4 1-8 0z" fill="#f8c020" />
        </svg>
        <span className="text-[20px] italic">开始</span>
      </div>
      <div className="ml-[3px] flex h-[24px] w-[42px] items-center justify-center rounded-[2px] border border-[#6a9cf0]">
        <svg width={20} height={20} viewBox="0 0 20 20"><circle cx={7} cy={5} r={4} fill="#f0c020" /><circle cx={6} cy={14} r={4} fill="#f0c020" /><circle cx={14} cy={6} r={3} fill="#4080e0" /><circle cx={14} cy={14} r={4} fill="#d04040" /></svg>
      </div>
      <svg className="ml-[7px]" width={16} height={16} viewBox="0 0 16 16">
        <circle cx={8} cy={8} r={7.5} fill="#3080f0" />
        <path d="M8 8L8 .5A7.5 7.5 0 0 1 15.5 8z" fill="#f04060" />
        <path d="M8 8L15.5 8A7.5 7.5 0 0 1 8 15.5z" fill="#f0c020" />
        <path d="M8 8L8 15.5A7.5 7.5 0 0 1 .5 8z" fill="#40c040" />
      </svg>
      <svg className="ml-[6px]" width={16} height={18} viewBox="0 0 16 18">
        <ellipse cx={8} cy={9} rx={6} ry={8} fill="#111" />
        <ellipse cx={8} cy={12} rx={4} ry={4.5} fill="#fff" />
        <rect x={3} y={9} width={10} height={2} fill="#e02020" />
        <path d="M2 16h5v2H2zM9 16h5v2H9z" fill="#f0b020" />
      </svg>
      <svg className="ml-[7px]" width={16} height={16} viewBox="0 0 16 16">
        <rect x={1} y={2} width={12} height={13} fill="#fff" stroke="#1040a0" />
        <path d="M4 11l6-7 2 2-6 7z" fill="#3080e0" />
      </svg>
      <span className="ml-[8px] w-[18px] -translate-y-[5px] text-[12px] text-[#bcd2f8]">»</span>
      <div className="flex">
        <TaskButton label="通达信金融终端V7..." cls="w-[160px] border-[#b06a08] bg-[#e27f0c]" />
        <TaskButton label="通达信金融终端V7..." cls="w-[160px] border-[#b06a08] bg-[#e27f0c]" />
        <TaskButton label="通达信金融终端V7..." cls="w-[160px] border-[#2a60c8] bg-[#3c81f3]" />
        <TaskButton label="通达信金融终端V7..." cls="w-[161px] border-[#173f98] bg-[#1e52b7]" />
        <TaskButton
          label="安信证券4.999"
          cls="w-[159px] border-[#2a60c8] bg-[#3c81f3]"
          icon={<svg width={16} height={16} viewBox="0 0 16 16"><rect x={4} y={1} width={10} height={11} fill="#f0c020" stroke="#fff" /><rect x={1} y={4} width={10} height={11} fill="#1040a0" stroke="#fff" /></svg>}
        />
      </div>
      <span className="ml-[56px] text-[12px] text-[#a4c4f4]">我的电脑</span>
      <span className="ml-[7px] -translate-y-[4px] text-[13px] text-[#c4d8f8]">»</span>
      <svg className="ml-[11px]" width={16} height={14} viewBox="0 0 16 14"><rect x={0.5} y={3.5} width={15} height={10} rx={1} fill="#ddd" stroke="#333" /><path d="M2 6h12M2 8.5h12M4 11h8" stroke="#444" strokeDasharray="1 1" /></svg>
      <div className="ml-[9px] flex h-[20px] w-[20px] items-center justify-center rounded-full border border-[#9cc0f0] bg-[#2c70e0] text-[14px] font-bold">‹</div>
      <svg className="ml-[3px]" width={15} height={18} viewBox="0 0 15 18"><rect x={2} y={7} width={11} height={10} rx={1} fill="#e8a020" stroke="#804010" /><path d="M4 7V4a3.5 3.5 0 0 1 7 0v3" fill="none" stroke="#e04080" strokeWidth={2} /></svg>
      <span className="ml-[8px] text-[12px]">13:25</span>
      <span className="absolute top-[1px] left-[1165px] text-[18px] leading-[22px] font-bold whitespace-nowrap text-white/50">178448.COM</span>
    </div>
  );
}

export default function App() {
  return (
    <div className={`flex h-[1024px] w-[1280px] flex-col overflow-hidden bg-[#ece9d8] text-black ${CN}`}>
      <TopBar />
      <div className="flex h-[949px]">
        <LeftColumn />
        <RightColumn />
        <Toolbar />
      </div>
      <StatusBar />
      <Taskbar />
    </div>
  );
}
